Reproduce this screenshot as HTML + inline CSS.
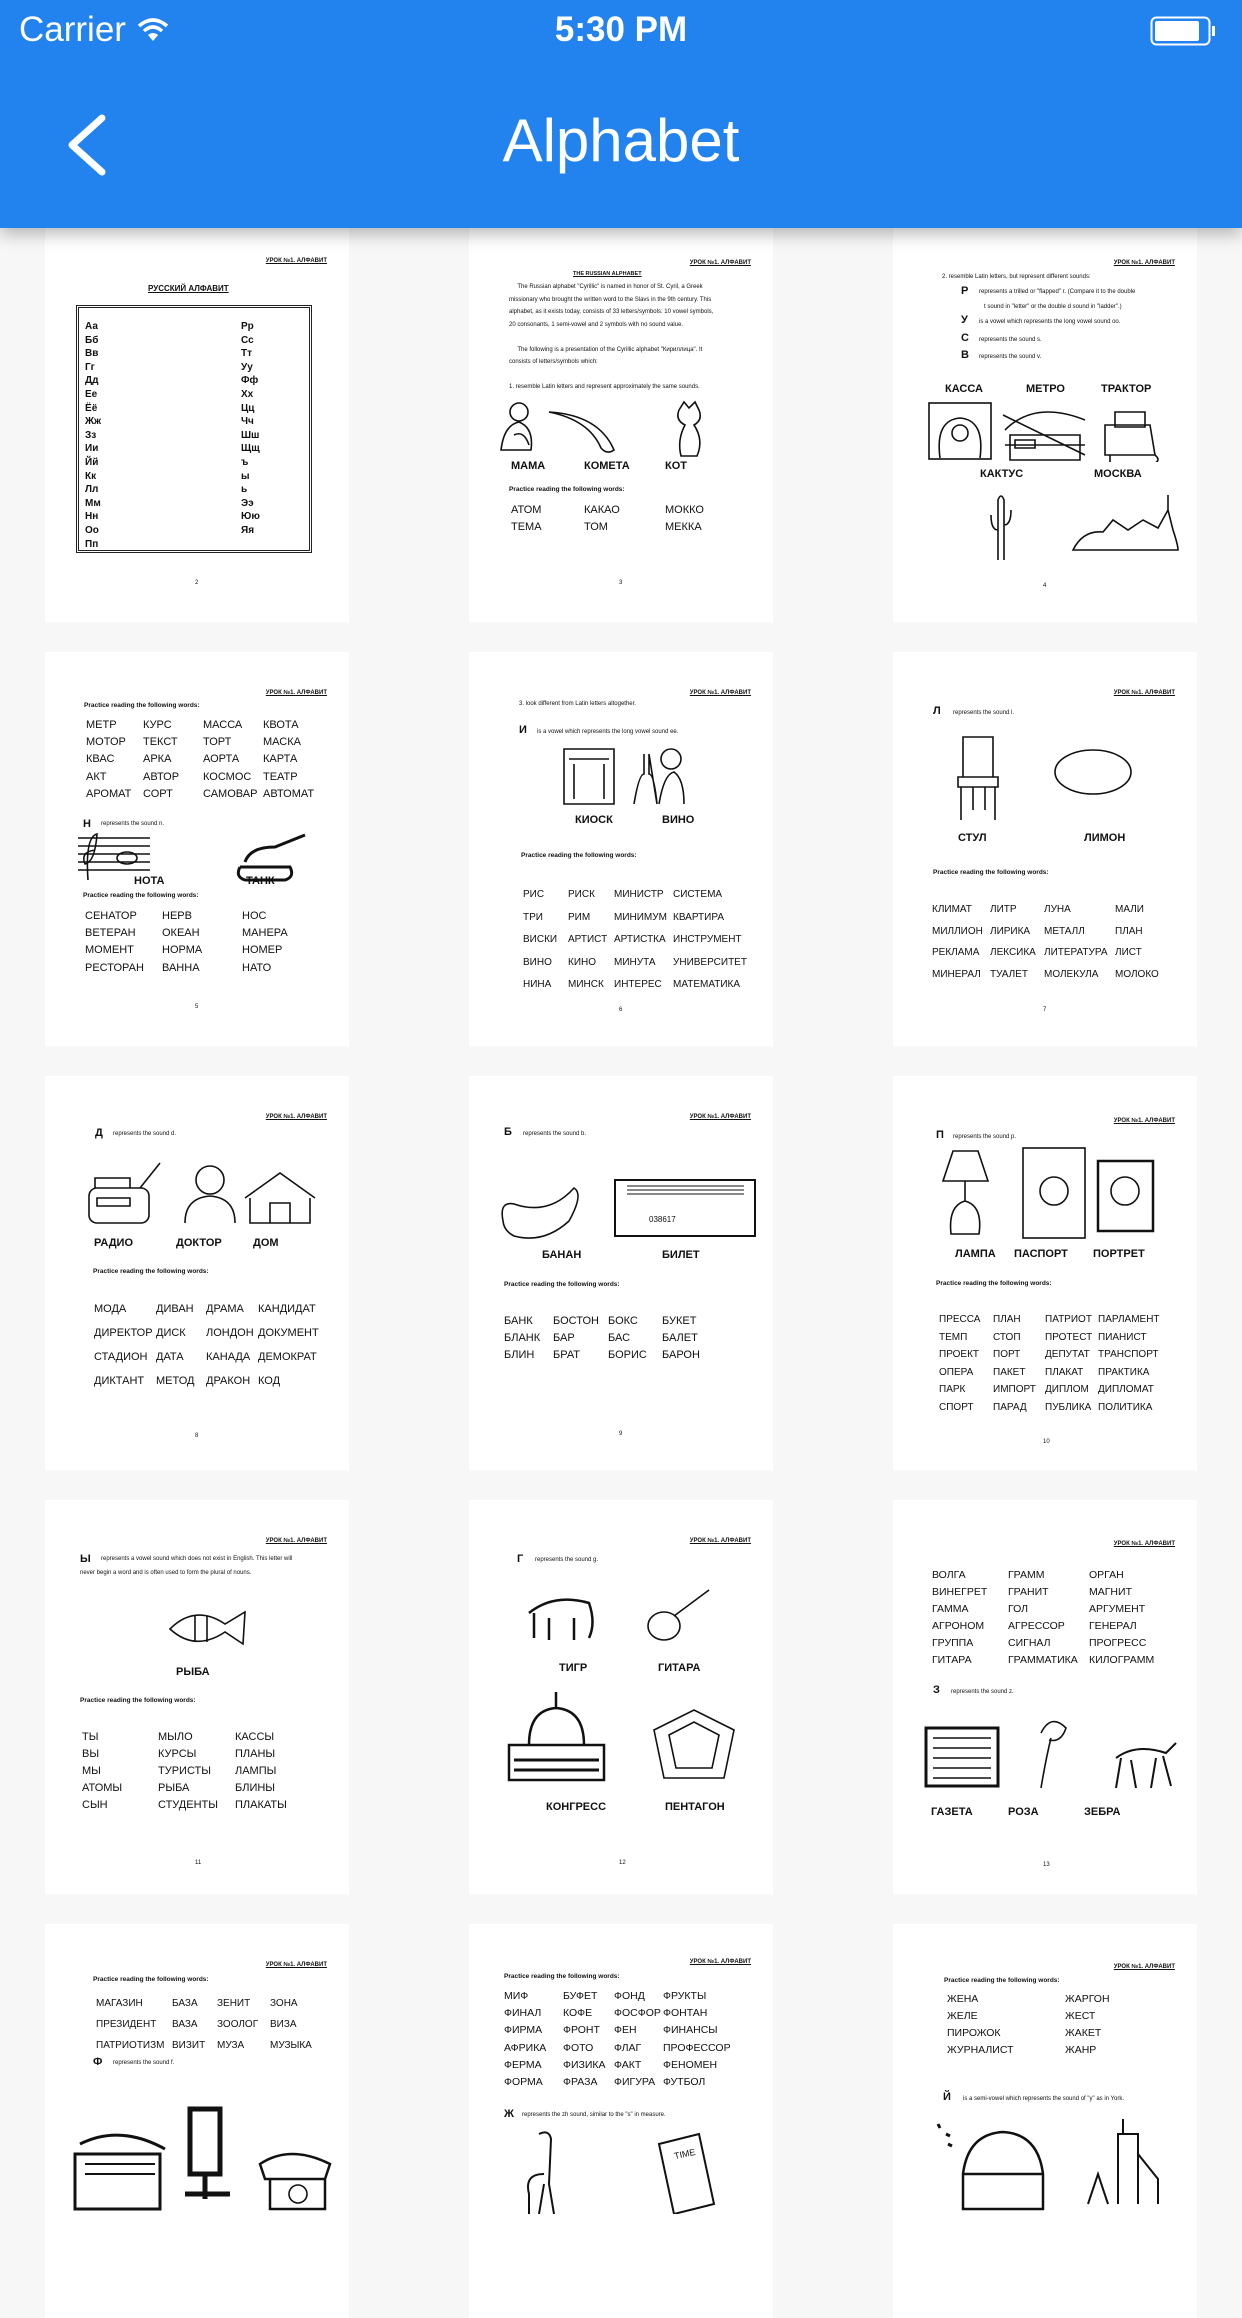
<!DOCTYPE html>
<html><head><meta charset="utf-8"><style>
*{margin:0;padding:0;box-sizing:border-box}
body{width:1242px;height:2208px;overflow:hidden;background:#f7f7f7;font-family:"Liberation Sans",sans-serif;position:relative}
.hdr{position:absolute;left:0;top:0;width:1242px;height:228px;background:#2383ee;z-index:5;box-shadow:0 6px 16px rgba(0,0,0,.28)}
.hdr .c{position:absolute;left:19px;top:10px;color:#fff;font-size:35px}
.hdr .tm{position:absolute;left:0;width:1242px;text-align:center;top:10px;color:#fff;font-size:35px;font-weight:bold}
.hdr .ti{position:absolute;left:0;width:1242px;text-align:center;top:106px;color:#fff;font-size:60px}
.card{position:absolute;width:304px;height:394px;background:#fff;overflow:hidden}
.card *{position:absolute;white-space:nowrap;color:#111}
.h{right:22px;font-size:6px;font-weight:bold;text-decoration:underline}
.w{font-size:11px;line-height:12px}
.b{font-size:11px;font-weight:bold;line-height:12px}
.p{font-size:6.5px;font-weight:bold;line-height:8px}
.s{font-size:6px;line-height:8px}
.L{font-size:10px;font-weight:bold}
.n{font-size:6px;left:150px}
svg.i{fill:none;stroke:#111;stroke-width:1.6}
</style></head><body>
<div class="hdr">
<div class="c">Carrier <svg width="34" height="26" viewBox="0 0 34 26" style="vertical-align:-2px"><path d="M3 9 Q17 -3 31 9" stroke="#fff" stroke-width="3.5" fill="none"/><path d="M8 14 Q17 6 26 14" stroke="#fff" stroke-width="3.5" fill="none"/><path d="M17 24 L12 18 Q17 14 22 18 Z" fill="#fff"/></svg></div>
<div class="tm">5:30 PM</div>
<svg style="position:absolute;left:1150px;top:16px" width="80" height="30"><rect x="1.5" y="1.5" width="58" height="27" rx="5" fill="none" stroke="#fff" stroke-width="2"/><rect x="5" y="5" width="44" height="20" rx="2" fill="#fff"/><rect x="62" y="10" width="3" height="10" fill="#fff"/></svg>
<svg style="position:absolute;left:60px;top:112px" width="50" height="66"><path d="M42 6 L12 33 L42 60" fill="none" stroke="#fff" stroke-width="7" stroke-linecap="round" stroke-linejoin="round"/></svg>
<div class="ti">Alphabet</div>
</div>

<!-- Row 1 -->
<div class="card" style="left:45px;top:228px">
<div class="h" style="top:30px">УРОК №1. АЛФАВИТ</div>
<div class="p" style="left:103px;top:57px;font-size:8px;text-decoration:underline">РУССКИЙ АЛФАВИТ</div>
<div style="left:31px;top:77px;width:236px;height:248px;border:3px double #222"></div>
<div class="L" style="left:40px;top:92px;line-height:13.6px">Аа<br>Бб<br>Вв<br>Гг<br>Дд<br>Ее<br>Ёё<br>Жж<br>Зз<br>Ии<br>Йй<br>Кк<br>Лл<br>Мм<br>Нн<br>Оо<br>Пп</div>
<div class="L" style="left:196px;top:92px;line-height:13.6px">Рр<br>Сс<br>Тт<br>Уу<br>Фф<br>Хх<br>Цц<br>Чч<br>Шш<br>Щщ<br>ъ<br>ы<br>ь<br>Ээ<br>Юю<br>Яя</div>
<div class="n" style="top:352px">2</div>
</div>

<div class="card" style="left:469px;top:228px">
<div class="h" style="top:32px">УРОК №1. АЛФАВИТ</div>
<div class="p" style="left:104px;top:42px;text-decoration:underline;font-size:5.5px">THE RUSSIAN ALPHABET</div>
<div class="s" style="left:40px;top:53px;line-height:12.5px">&nbsp;&nbsp;&nbsp;&nbsp;&nbsp;The Russian alphabet "Cyrillic" is named in honor of St. Cyril, a Greek<br>missionary who brought the written word to the Slavs in the 9th century. This<br>alphabet, as it exists today, consists of 33 letters/symbols: 10 vowel symbols,<br>20 consonants, 1 semi-vowel and 2 symbols with no sound value.<br><br>&nbsp;&nbsp;&nbsp;&nbsp;&nbsp;The following is a presentation of the Cyrillic alphabet "Кириллица". It<br>consists of letters/symbols which:<br><br>1. resemble Latin letters and represent approximately the same sounds.</div>
<svg class="i" style="left:20px;top:172px" width="270" height="60"><circle cx="30" cy="12" r="9"/><path d="M12 50 Q15 25 30 22 Q45 28 42 50 Z M25 35 Q35 30 40 45"/><path d="M60 12 Q110 15 125 50 Q118 55 112 48 Q100 20 60 12"/><path d="M190 10 L195 2 L200 8 L206 2 L210 10 Q214 20 205 25 Q215 40 208 56 L192 56 Q188 40 196 25 Q186 20 190 10"/></svg>
<div class="b" style="left:42px;top:232px">МАМА</div><div class="b" style="left:115px;top:232px">КОМЕТА</div><div class="b" style="left:196px;top:232px">КОТ</div>
<div class="p" style="left:40px;top:258px">Practice reading the following words:</div>
<div class="w" style="left:42px;top:276px">АТОМ</div><div class="w" style="left:115px;top:276px">КАКАО</div><div class="w" style="left:196px;top:276px">МОККО</div>
<div class="w" style="left:42px;top:293px">ТЕМА</div><div class="w" style="left:115px;top:293px">ТОМ</div><div class="w" style="left:196px;top:293px">МЕККА</div>
<div class="n" style="top:352px">3</div>
</div>

<div class="card" style="left:893px;top:228px">
<div class="h" style="top:32px">УРОК №1. АЛФАВИТ</div>
<div class="s" style="left:49px;top:45px">2. resemble Latin letters, but represent different sounds:</div>
<div class="b" style="left:68px;top:57px">Р</div><div class="s" style="left:86px;top:60px">represents a trilled or "flapped" r. (Compare it to the double</div>
<div class="s" style="left:91px;top:75px">t sound in "letter" or the double d sound in "ladder".)</div>
<div class="b" style="left:68px;top:86px">У</div><div class="s" style="left:86px;top:90px">is a vowel which represents the long vowel sound oo.</div>
<div class="b" style="left:68px;top:104px">С</div><div class="s" style="left:86px;top:108px">represents the sound s.</div>
<div class="b" style="left:68px;top:121px">В</div><div class="s" style="left:86px;top:125px">represents the sound v.</div>
<div class="b" style="left:52px;top:155px">КАССА</div><div class="b" style="left:133px;top:155px">МЕТРО</div><div class="b" style="left:208px;top:155px">ТРАКТОР</div>
<svg class="i" style="left:32px;top:172px" width="245" height="62"><rect x="4" y="3" width="62" height="56"/><path d="M15 58 Q10 20 35 18 Q60 20 55 58"/><circle cx="35" cy="33" r="8"/><path d="M80 30 Q110 0 160 20 M78 15 L160 55 M80 45 L160 45 M85 35 h70 v25 h-70z M90 40 h20 v8 h-20z"/><path d="M180 25 h45 l5 30 h-50 z M190 12 h30 v15 h-30 z M185 55 h45 q6 5 0 8 h-45 z"/></svg>
<div class="b" style="left:87px;top:240px">КАКТУС</div><div class="b" style="left:201px;top:240px">МОСКВА</div>
<svg class="i" style="left:90px;top:262px" width="200" height="72"><path d="M15 70 V10 Q18 2 21 10 V70 M15 40 Q8 40 8 25 M21 35 Q28 35 28 20"/><path d="M90 60 Q100 40 120 42 L130 30 L145 40 L160 30 L175 38 L185 20 L190 40 Q195 55 195 60 Z M185 20 V5"/></svg>
<div class="n" style="top:355px">4</div>
</div>

<!-- Row 2 -->
<div class="card" style="left:45px;top:652px">
<div class="h" style="top:38px">УРОК №1. АЛФАВИТ</div>
<div class="p" style="left:39px;top:50px">Practice reading the following words:</div>
<div class="w" style="left:41px;top:65px;line-height:17.2px">МЕТР<br>МОТОР<br>КВАС<br>АКТ<br>АРОМАТ</div>
<div class="w" style="left:98px;top:65px;line-height:17.2px">КУРС<br>ТЕКСТ<br>АРКА<br>АВТОР<br>СОРТ</div>
<div class="w" style="left:158px;top:65px;line-height:17.2px">МАССА<br>ТОРТ<br>АОРТА<br>КОСМОС<br>САМОВАР</div>
<div class="w" style="left:218px;top:65px;line-height:17.2px">КВОТА<br>МАСКА<br>КАРТА<br>ТЕАТР<br>АВТОМАТ</div>
<div class="b" style="left:38px;top:166px">Н</div><div class="s" style="left:56px;top:168px">represents the sound n.</div>
<svg class="i" style="left:30px;top:180px" width="250" height="50"><path d="M3 6 H75 M3 14 H75 M3 22 H75 M3 30 H75 M3 38 H75"/><path d="M13 48 Q10 5 22 2 Q20 30 10 32 Q5 20 20 18"/><ellipse cx="52" cy="26" rx="10" ry="6"/><path d="M170 30 Q175 15 200 15 L230 3 M165 35 H215 Q220 45 210 48 H170 Q160 45 165 35" stroke-width="3"/></svg>
<div class="b" style="left:89px;top:223px">НОТА</div><div class="b" style="left:201px;top:223px">ТАНК</div>
<div class="p" style="left:38px;top:240px">Practice reading the following words:</div>
<div class="w" style="left:40px;top:256px;line-height:17.2px">СЕНАТОР<br>ВЕТЕРАН<br>МОМЕНТ<br>РЕСТОРАН</div>
<div class="w" style="left:117px;top:256px;line-height:17.2px">НЕРВ<br>ОКЕАН<br>НОРМА<br>ВАННА</div>
<div class="w" style="left:197px;top:256px;line-height:17.2px">НОС<br>МАНЕРА<br>НОМЕР<br>НАТО</div>
<div class="n" style="top:352px">5</div>
</div>

<div class="card" style="left:469px;top:652px">
<div class="h" style="top:38px">УРОК №1. АЛФАВИТ</div>
<div class="s" style="left:50px;top:48px">3. look different from Latin letters altogether.</div>
<div class="b" style="left:50px;top:72px">И</div><div class="s" style="left:68px;top:76px">is a vowel which represents the long vowel sound ee.</div>
<svg class="i" style="left:90px;top:92px" width="130" height="68"><path d="M5 5 H55 V60 H5 Z M10 15 H50 M15 20 V55 M45 20 V55"/><path d="M75 60 Q80 30 85 30 V10 M90 10 V30 Q95 30 98 60 Z"/><circle cx="112" cy="15" r="10"/><path d="M100 60 Q105 30 115 28 Q125 35 125 60"/></svg>
<div class="b" style="left:106px;top:162px">КИОСК</div><div class="b" style="left:193px;top:162px">ВИНО</div>
<div class="p" style="left:52px;top:200px">Practice reading the following words:</div>
<div class="w" style="left:54px;top:232px;line-height:22.5px;font-size:10px">РИС<br>ТРИ<br>ВИСКИ<br>ВИНО<br>НИНА</div>
<div class="w" style="left:99px;top:232px;line-height:22.5px;font-size:10px">РИСК<br>РИМ<br>АРТИСТ<br>КИНО<br>МИНСК</div>
<div class="w" style="left:145px;top:232px;line-height:22.5px;font-size:10px">МИНИСТР<br>МИНИМУМ<br>АРТИСТКА<br>МИНУТА<br>ИНТЕРЕС</div>
<div class="w" style="left:204px;top:232px;line-height:22.5px;font-size:10px">СИСТЕМА<br>КВАРТИРА<br>ИНСТРУМЕНТ<br>УНИВЕРСИТЕТ<br>МАТЕМАТИКА</div>
<div class="n" style="top:355px">6</div>
</div>

<div class="card" style="left:893px;top:652px">
<div class="h" style="top:38px">УРОК №1. АЛФАВИТ</div>
<div class="b" style="left:40px;top:53px">Л</div><div class="s" style="left:60px;top:57px">represents the sound l.</div>
<svg class="i" style="left:40px;top:80px" width="220" height="92"><path d="M30 5 H60 V45 H30 Z M25 45 H65 V55 H25 Z M28 55 V88 M62 55 V88 M40 55 V78 M52 55 V78"/><ellipse cx="160" cy="40" rx="38" ry="22"/></svg>
<div class="b" style="left:65px;top:180px">СТУЛ</div><div class="b" style="left:191px;top:180px">ЛИМОН</div>
<div class="p" style="left:40px;top:217px">Practice reading the following words:</div>
<div class="w" style="left:39px;top:247px;line-height:21.5px;font-size:10px">КЛИМАТ<br>МИЛЛИОН<br>РЕКЛАМА<br>МИНЕРАЛ</div>
<div class="w" style="left:97px;top:247px;line-height:21.5px;font-size:10px">ЛИТР<br>ЛИРИКА<br>ЛЕКСИКА<br>ТУАЛЕТ</div>
<div class="w" style="left:151px;top:247px;line-height:21.5px;font-size:10px">ЛУНА<br>МЕТАЛЛ<br>ЛИТЕРАТУРА<br>МОЛЕКУЛА</div>
<div class="w" style="left:222px;top:247px;line-height:21.5px;font-size:10px">МАЛИ<br>ПЛАН<br>ЛИСТ<br>МОЛОКО</div>
<div class="n" style="top:355px">7</div>
</div>

<!-- Row 3 -->
<div class="card" style="left:45px;top:1076px">
<div class="h" style="top:38px">УРОК №1. АЛФАВИТ</div>
<div class="b" style="left:50px;top:51px">Д</div><div class="s" style="left:68px;top:54px">represents the sound d.</div>
<svg class="i" style="left:40px;top:82px" width="240" height="70"><rect x="4" y="30" width="60" height="35" rx="8"/><path d="M10 30 V20 H45 V30 M55 30 L75 5 M12 40 H45 V48 H12 Z"/><circle cx="125" cy="22" r="14"/><path d="M100 65 Q100 40 125 38 Q150 40 150 65"/><path d="M160 40 L195 15 L230 40 M165 40 V65 H225 V40 M185 45 H205 V65 H185 Z"/></svg>
<div class="b" style="left:49px;top:161px">РАДИО</div><div class="b" style="left:131px;top:161px">ДОКТОР</div><div class="b" style="left:208px;top:161px">ДОМ</div>
<div class="p" style="left:48px;top:192px">Practice reading the following words:</div>
<div class="w" style="left:49px;top:221px;line-height:24px">МОДА<br>ДИРЕКТОР<br>СТАДИОН<br>ДИКТАНТ</div>
<div class="w" style="left:111px;top:221px;line-height:24px">ДИВАН<br>ДИСК<br>ДАТА<br>МЕТОД</div>
<div class="w" style="left:161px;top:221px;line-height:24px">ДРАМА<br>ЛОНДОН<br>КАНАДА<br>ДРАКОН</div>
<div class="w" style="left:213px;top:221px;line-height:24px">КАНДИДАТ<br>ДОКУМЕНТ<br>ДЕМОКРАТ<br>КОД</div>
<div class="n" style="top:357px">8</div>
</div>

<div class="card" style="left:469px;top:1076px">
<div class="h" style="top:38px">УРОК №1. АЛФАВИТ</div>
<div class="b" style="left:35px;top:50px">Б</div><div class="s" style="left:54px;top:54px">represents the sound b.</div>
<svg class="i" style="left:30px;top:100px" width="260" height="68"><path d="M4 45 Q0 25 15 28 Q50 40 75 12 Q85 18 70 45 Q45 68 15 60 Q5 55 4 45 Z"/><rect x="116" y="4" width="140" height="56" stroke-width="2"/><path d="M128 10 H245 M128 14 H245 M128 18 H245" stroke-width="1"/></svg>
<div class="s" style="left:180px;top:140px;font-size:8px">038617</div>
<div class="b" style="left:73px;top:173px">БАНАН</div><div class="b" style="left:193px;top:173px">БИЛЕТ</div>
<div class="p" style="left:35px;top:205px">Practice reading the following words:</div>
<div class="w" style="left:35px;top:237px;line-height:17px">БАНК<br>БЛАНК<br>БЛИН</div>
<div class="w" style="left:84px;top:237px;line-height:17px">БОСТОН<br>БАР<br>БРАТ</div>
<div class="w" style="left:139px;top:237px;line-height:17px">БОКС<br>БАС<br>БОРИС</div>
<div class="w" style="left:193px;top:237px;line-height:17px">БУКЕТ<br>БАЛЕТ<br>БАРОН</div>
<div class="n" style="top:355px">9</div>
</div>

<div class="card" style="left:893px;top:1076px">
<div class="h" style="top:42px">УРОК №1. АЛФАВИТ</div>
<div class="b" style="left:43px;top:53px">П</div><div class="s" style="left:60px;top:57px">represents the sound p.</div>
<svg class="i" style="left:40px;top:70px" width="240" height="95"><path d="M20 5 H45 L55 35 H10 Z M32 35 V55 M18 88 Q15 60 32 55 Q50 60 46 88 Z"/><rect x="90" y="2" width="62" height="90"/><circle cx="121" cy="45" r="14"/><rect x="165" y="15" width="55" height="70" stroke-width="2.5"/><circle cx="192" cy="45" r="14"/></svg>
<div class="b" style="left:62px;top:172px">ЛАМПА</div><div class="b" style="left:121px;top:172px">ПАСПОРТ</div><div class="b" style="left:200px;top:172px">ПОРТРЕТ</div>
<div class="p" style="left:43px;top:204px">Practice reading the following words:</div>
<div class="w" style="left:46px;top:235px;line-height:17.6px;font-size:10px">ПРЕССА<br>ТЕМП<br>ПРОЕКТ<br>ОПЕРА<br>ПАРК<br>СПОРТ</div>
<div class="w" style="left:100px;top:235px;line-height:17.6px;font-size:10px">ПЛАН<br>СТОП<br>ПОРТ<br>ПАКЕТ<br>ИМПОРТ<br>ПАРАД</div>
<div class="w" style="left:152px;top:235px;line-height:17.6px;font-size:10px">ПАТРИОТ<br>ПРОТЕСТ<br>ДЕПУТАТ<br>ПЛАКАТ<br>ДИПЛОМ<br>ПУБЛИКА</div>
<div class="w" style="left:205px;top:235px;line-height:17.6px;font-size:10px">ПАРЛАМЕНТ<br>ПИАНИСТ<br>ТРАНСПОРТ<br>ПРАКТИКА<br>ДИПЛОМАТ<br>ПОЛИТИКА</div>
<div class="n" style="top:363px">10</div>
</div>

<!-- Row 4 -->
<div class="card" style="left:45px;top:1500px">
<div class="h" style="top:38px">УРОК №1. АЛФАВИТ</div>
<div class="b" style="left:35px;top:53px">Ы</div><div class="s" style="left:56px;top:55px">represents a vowel sound which does not exist in English. This letter will</div>
<div class="s" style="left:35px;top:69px">never begin a word and is often used to form the plural of nouns.</div>
<svg class="i" style="left:120px;top:104px" width="85" height="48"><path d="M5 25 Q30 0 60 20 L80 8 L78 40 L60 28 Q30 48 5 25 Z M30 12 V38 M42 12 V38"/></svg>
<div class="b" style="left:131px;top:166px">РЫБА</div>
<div class="p" style="left:35px;top:197px">Practice reading the following words:</div>
<div class="w" style="left:37px;top:229px;line-height:17px">ТЫ<br>ВЫ<br>МЫ<br>АТОМЫ<br>СЫН</div>
<div class="w" style="left:113px;top:229px;line-height:17px">МЫЛО<br>КУРСЫ<br>ТУРИСТЫ<br>РЫБА<br>СТУДЕНТЫ</div>
<div class="w" style="left:190px;top:229px;line-height:17px">КАССЫ<br>ПЛАНЫ<br>ЛАМПЫ<br>БЛИНЫ<br>ПЛАКАТЫ</div>
<div class="n" style="top:360px">11</div>
</div>

<div class="card" style="left:469px;top:1500px">
<div class="h" style="top:38px">УРОК №1. АЛФАВИТ</div>
<div class="b" style="left:48px;top:53px">Г</div><div class="s" style="left:66px;top:56px">represents the sound g.</div>
<svg class="i" style="left:55px;top:88px" width="190" height="56"><path d="M5 25 Q30 5 65 15 Q72 35 65 50 M10 25 V50 M25 30 V52 M50 30 V52" stroke-width="2.5"/><ellipse cx="140" cy="38" rx="16" ry="14"/><path d="M150 28 L185 2"/></svg>
<div class="b" style="left:90px;top:162px">ТИГР</div><div class="b" style="left:189px;top:162px">ГИТАРА</div>
<svg class="i" style="left:35px;top:190px" width="240" height="95"><path d="M5 90 V55 H100 V90 Z M25 55 Q25 20 52 18 Q80 20 80 55 M52 18 V2" stroke-width="2.5"/><path d="M10 70 H95 M10 80 H95" stroke-width="3"/><path d="M150 40 L190 20 L230 40 L220 88 H160 Z M165 45 L190 32 L215 45 L208 78 H172 Z"/></svg>
<div class="b" style="left:77px;top:301px">КОНГРЕСС</div><div class="b" style="left:196px;top:301px">ПЕНТАГОН</div>
<div class="n" style="top:360px">12</div>
</div>

<div class="card" style="left:893px;top:1500px">
<div class="h" style="top:41px">УРОК №1. АЛФАВИТ</div>
<div class="w" style="left:39px;top:67px;line-height:17px;font-size:10.5px">ВОЛГА<br>ВИНЕГРЕТ<br>ГАММА<br>АГРОНОМ<br>ГРУППА<br>ГИТАРА</div>
<div class="w" style="left:115px;top:67px;line-height:17px;font-size:10.5px">ГРАММ<br>ГРАНИТ<br>ГОЛ<br>АГРЕССОР<br>СИГНАЛ<br>ГРАММАТИКА</div>
<div class="w" style="left:196px;top:67px;line-height:17px;font-size:10.5px">ОРГАН<br>МАГНИТ<br>АРГУМЕНТ<br>ГЕНЕРАЛ<br>ПРОГРЕСС<br>КИЛОГРАММ</div>
<div class="b" style="left:40px;top:184px">З</div><div class="s" style="left:58px;top:188px">represents the sound z.</div>
<svg class="i" style="left:28px;top:208px" width="260" height="85"><rect x="5" y="20" width="72" height="58" stroke-width="3"/><path d="M12 30 H70 M12 40 H70 M12 50 H70 M12 60 H70 M12 70 H70"/><path d="M120 80 Q125 50 130 30 M120 25 Q130 5 145 20 Q140 35 128 32"/><path d="M195 50 Q215 35 245 45 L255 35 M200 50 L195 80 M210 52 L215 80 M235 50 L230 80 M242 48 L250 78" stroke-width="2"/></svg>
<div class="b" style="left:38px;top:306px">ГАЗЕТА</div><div class="b" style="left:115px;top:306px">РОЗА</div><div class="b" style="left:191px;top:306px">ЗЕБРА</div>
<div class="n" style="top:362px">13</div>
</div>

<!-- Row 5 -->
<div class="card" style="left:45px;top:1924px">
<div class="h" style="top:38px">УРОК №1. АЛФАВИТ</div>
<div class="p" style="left:48px;top:52px">Practice reading the following words:</div>
<div class="w" style="left:51px;top:69px;line-height:21px;font-size:10px">МАГАЗИН<br>ПРЕЗИДЕНТ<br>ПАТРИОТИЗМ</div>
<div class="w" style="left:127px;top:69px;line-height:21px;font-size:10px">БАЗА<br>ВАЗА<br>ВИЗИТ</div>
<div class="w" style="left:172px;top:69px;line-height:21px;font-size:10px">ЗЕНИТ<br>ЗООЛОГ<br>МУЗА</div>
<div class="w" style="left:225px;top:69px;line-height:21px;font-size:10px">ЗОНА<br>ВИЗА<br>МУЗЫКА</div>
<div class="b" style="left:48px;top:132px">Ф</div><div class="s" style="left:68px;top:135px">represents the sound f.</div>
<svg class="i" style="left:25px;top:170px" width="270" height="120"><path d="M5 60 H90 V115 H5 Z M10 50 Q50 30 95 55" stroke-width="3"/><path d="M15 70 H85 M15 80 H85" stroke-width="2"/><path d="M120 15 H150 V80 H120 Z M115 100 H160 M135 80 V105" stroke-width="5"/><path d="M190 70 Q220 50 260 70 L255 85 H195 Z M200 85 V115 H255 V85" stroke-width="2.5"/><circle cx="228" cy="100" r="9"/></svg>
</div>

<div class="card" style="left:469px;top:1924px">
<div class="h" style="top:35px">УРОК №1. АЛФАВИТ</div>
<div class="p" style="left:35px;top:49px">Practice reading the following words:</div>
<div class="w" style="left:35px;top:64px;line-height:17.2px;font-size:10.5px">МИФ<br>ФИНАЛ<br>ФИРМА<br>АФРИКА<br>ФЕРМА<br>ФОРМА</div>
<div class="w" style="left:94px;top:64px;line-height:17.2px;font-size:10.5px">БУФЕТ<br>КОФЕ<br>ФРОНТ<br>ФОТО<br>ФИЗИКА<br>ФРАЗА</div>
<div class="w" style="left:145px;top:64px;line-height:17.2px;font-size:10.5px">ФОНД<br>ФОСФОР<br>ФЕН<br>ФЛАГ<br>ФАКТ<br>ФИГУРА</div>
<div class="w" style="left:194px;top:64px;line-height:17.2px;font-size:10.5px">ФРУКТЫ<br>ФОНТАН<br>ФИНАНСЫ<br>ПРОФЕССОР<br>ФЕНОМЕН<br>ФУТБОЛ</div>
<div class="b" style="left:35px;top:184px">Ж</div><div class="s" style="left:53px;top:187px">represents the zh sound, similar to the "s" in measure.</div>
<svg class="i" style="left:40px;top:200px" width="230" height="90"><path d="M30 10 Q40 5 42 15 L40 60 L45 90 M35 60 L30 90 M20 90 V70 Q15 50 35 50" stroke-width="2"/><path d="M150 20 L190 10 L205 80 L165 90 Z" stroke-width="2"/></svg>
<div class="s" style="left:205px;top:226px;font-size:9px;transform:rotate(-12deg)">TIME</div>
</div>

<div class="card" style="left:893px;top:1924px">
<div class="h" style="top:40px">УРОК №1. АЛФАВИТ</div>
<div class="p" style="left:51px;top:53px">Practice reading the following words:</div>
<div class="w" style="left:54px;top:67px;line-height:17px;font-size:10.5px">ЖЕНА<br>ЖЕЛЕ<br>ПИРОЖОК<br>ЖУРНАЛИСТ</div>
<div class="w" style="left:172px;top:67px;line-height:17px;font-size:10.5px">ЖАРГОН<br>ЖЕСТ<br>ЖАКЕТ<br>ЖАНР</div>
<div class="b" style="left:50px;top:167px">Й</div><div class="s" style="left:70px;top:171px">is a semi-vowel which represents the sound of "y" as in York.</div>
<svg class="i" style="left:35px;top:190px" width="240" height="100"><path d="M35 95 V60 Q40 20 75 18 Q110 20 115 60 V95 Z M35 60 H115" stroke-width="2.5"/><path d="M10 10 l2 4 M18 20 l4 2 M20 30 l4 2" stroke-width="3"/><path d="M160 90 L170 60 L180 90 M190 90 V20 H210 V90 M210 40 L230 65 V90 M195 5 V20" stroke-width="2"/></svg>
</div>
</body></html>
